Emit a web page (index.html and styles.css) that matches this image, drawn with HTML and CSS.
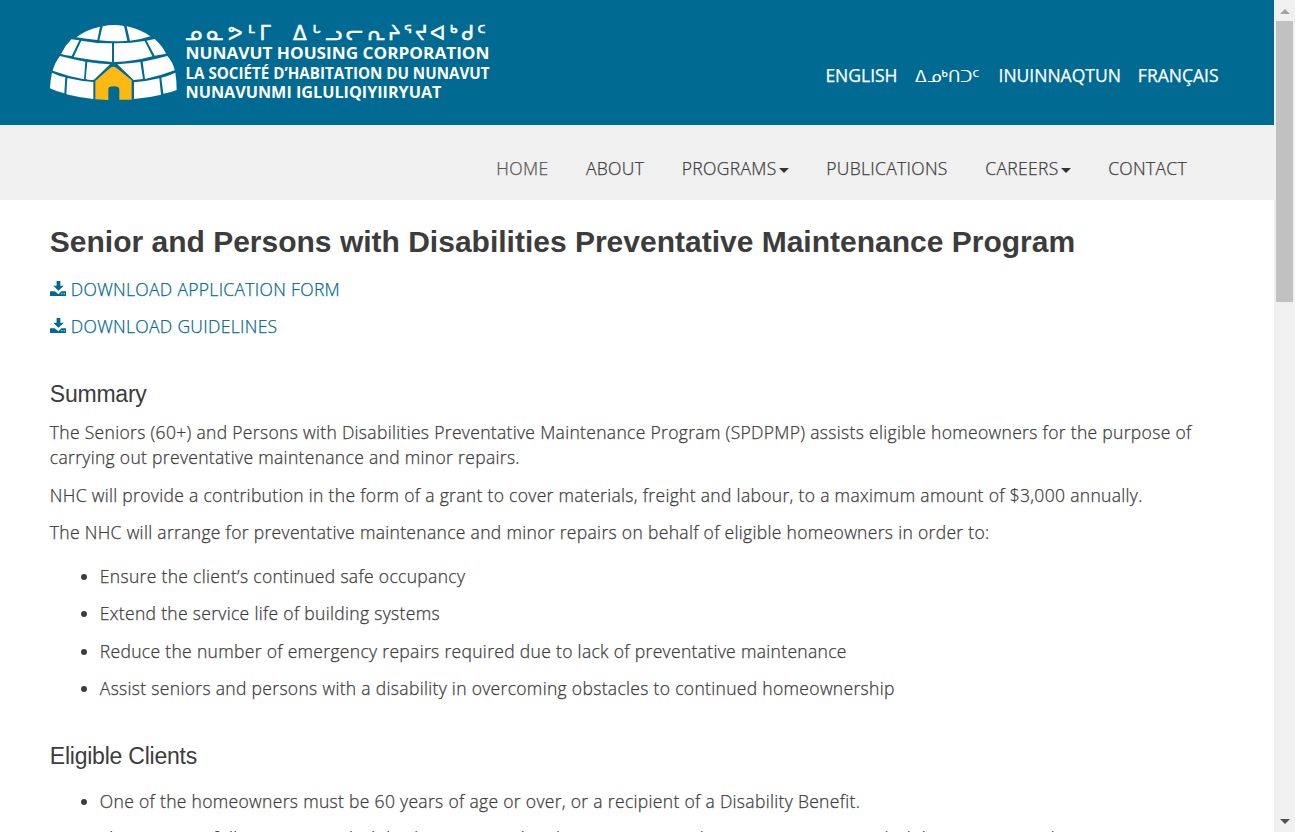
FILE: index.html
```html
<!DOCTYPE html>
<html lang="en">
<head>
<meta charset="utf-8">
<title>Nunavut Housing Corporation</title>
<link rel="stylesheet" href="styles.css">
</head>
<body>
<div class="window">
<div class="page">
<header class="top">
<svg class="logo" width="450" height="92" viewBox="50 16 450 92" role="img" aria-label="Nunavut Housing Corporation">
<g transform="translate(40 10) scale(.33333)">
<g fill="#fff">
<path d="M188 49Q220 42 252 48L262 92Q220 96 178 91Z"/>
<path d="M180 50L172 90Q140 87 109 82Q140 58 180 50Z"/>
<path d="M260 49Q302 58 331 79Q302 89 270 92Z"/>
<path d="M94 88L118 91L95 138Q79 137 63 132Q74 108 94 88Z"/>
<path d="M124 92Q170 101 216 100V156Q160 152 101 141Z"/>
<path d="M222 100Q270 101 314 93L337 139Q280 155 222 156Z"/>
<path d="M320 92L344 87Q367 107 378 131L344 137Z"/>
<path d="M60 138Q98 148 136 155L132 208Q85 199 38 182Q44 158 60 138Z"/>
<path d="M142 156Q178 161 210 163L162 209Q150 212 137 207Z"/>
<path d="M232 163Q270 160 301 156L309 207L281 210Z"/>
<path d="M308 155Q346 148 382 138Q400 158 404 181Q360 198 315 207Z"/>
<path d="M36 188Q56 198 76 202L73 250Q52 246 30 235Q31 210 36 188Z"/>
<path d="M82 204Q120 213 160 216V267Q118 263 79 253Z"/>
<path d="M282 217Q320 214 358 205L363 254Q324 264 282 267Z"/>
<path d="M364 203Q388 197 406 188Q410 211 410 240Q392 248 370 251Z"/>
</g>
<path fill="#fdb913" d="M166 213L211 173Q220 167 229 173L275 211V269H238V239Q238 229 221 229T205 239V270L166 268Z"/>
</g>
<g class="logo-text">
<text class="syllabics" y="39.600" x="185 206.500 228 248 259.500 293 312.500 325 346 367 388 403.500 415 430 449.500 461.500 477">ᓄᓇᕗᒻᒥᐃᒡᓗᓕᕆᔨᕐᔪᐊᒃᑯᑦ</text>
<text x="185.500" y="59.200" textLength="304" lengthAdjust="spacingAndGlyphs">NUNAVUT HOUSING CORPORATION</text>
<text x="185.500" y="78.500" textLength="304" lengthAdjust="spacingAndGlyphs">LA SOCIÉTÉ D’HABITATION DU NUNAVUT</text>
<text x="185.500" y="98" textLength="256" lengthAdjust="spacingAndGlyphs">NUNAVUNMI IGLULIQIYIIRYUAT</text>
</g>
</svg>
<nav class="languages"><a>ENGLISH</a><a class="inuktitut">ᐃᓄᒃᑎᑐᑦ</a><a>INUINNAQTUN</a><a>FRANÇAIS</a></nav>
</header>
<nav class="menu"><a class="active">HOME</a><a>ABOUT</a><a>PROGRAMS<i class="caret"></i></a><a>PUBLICATIONS</a><a>CAREERS<i class="caret"></i></a><a>CONTACT</a></nav>
<main class="content">
<h1>Senior and Persons with Disabilities Preventative Maintenance Program</h1>
<p><a class="download"><svg class="icon" width="16" height="15" viewBox="0 0 17 16" preserveAspectRatio="none"><path fill="currentColor" fill-rule="evenodd" d="M7 0h4v5h3.500L9 10.500 3.500 5H7zM0 11h5l4 3 3-3h5v5H0zM12 13v1.200h1.200V13zm2.500 0v1.200h1.200V13z"/></svg>DOWNLOAD APPLICATION FORM</a></p>
<p><a class="download"><svg class="icon" width="16" height="15" viewBox="0 0 17 16" preserveAspectRatio="none"><path fill="currentColor" fill-rule="evenodd" d="M7 0h4v5h3.500L9 10.500 3.500 5H7zM0 11h5l4 3 3-3h5v5H0zM12 13v1.200h1.200V13zm2.500 0v1.200h1.200V13z"/></svg>DOWNLOAD GUIDELINES</a></p>
<h2>Summary</h2>
<p>The Seniors (60+) and Persons with Disabilities Preventative Maintenance Program (SPDPMP) assists eligible homeowners for the purpose of carrying out preventative maintenance and minor repairs.</p>
<p>NHC will provide a contribution in the form of a grant to cover materials, freight and labour, to a maximum amount of $3,000 annually.</p>
<p>The NHC will arrange for preventative maintenance and minor repairs on behalf of eligible homeowners in order to:</p>
<ul>
<li>Ensure the client’s continued safe occupancy</li>
<li>Extend the service life of building systems</li>
<li>Reduce the number of emergency repairs required due to lack of preventative maintenance</li>
<li>Assist seniors and persons with a disability in overcoming obstacles to continued homeownership</li>
</ul>
<h2>Eligible Clients</h2>
<ul>
<li>One of the homeowners must be 60 years of age or over, or a recipient of a Disability Benefit.</li>
<li>This program follows income eligibility limits as used on homeowners, each in a means census, eligibility as measured</li>
</ul>
</main>
</div>
<div class="scrollbar"><i class="arrow up"></i><i class="thumb"></i><i class="arrow down"></i></div>
</div>
</body>
</html>
```
FILE: styles.css
```css
* { box-sizing: border-box; }
body {
  margin: 0;
  overflow: hidden;
  background: #fff;
  color: #3c3c3c;
  font: 300 17.5px/25px "Open Sans", "DejaVu Sans", sans-serif;
  letter-spacing: .32px;
  -webkit-text-stroke: .25px;
}
.window { display: flex; width: 1295px; height: 832px; overflow: hidden; }
.page { width: 1274px; height: 832px; overflow: hidden; }
.top {
  display: flex;
  justify-content: space-between;
  height: 125px;
  padding: 16px 55.5px 0 50px;
  background: #006a92;
}
.logo { display: block; overflow: visible; }
.logo-text {
  fill: #fff;
  font: 700 15.200px "Open Sans", sans-serif;
  letter-spacing: 0;
}
.syllabics { font: 400 20px "DejaVu Sans", sans-serif; stroke: #fff; stroke-width: .5px; }
.languages { display: flex; gap: 17px; padding-top: 47px; color: #fff; font-weight: 400; letter-spacing: 0; }
.inuktitut {
  width: 67px;
  padding-top: 1px;
  font-family: "DejaVu Sans", sans-serif;
  font-size: 17.3px;
  font-weight: 200;
  -webkit-text-stroke: 0;
}
.menu {
  display: flex;
  justify-content: flex-end;
  gap: 37.600px;
  height: 75px;
  padding: 31px 87px 0 0;
  background: #f0f0f0;
}
.active { color: #555; }
.caret {
  display: inline-block;
  margin-left: 2px;
  vertical-align: middle;
  border: 5px solid transparent;
  border-top-color: #333;
  border-bottom: 0;
}
.content { padding: 22px 50px 0 49.800px; }
h1, h2 {
  margin: 0;
  font-family: "Liberation Sans", Arial, sans-serif;
  letter-spacing: 0;
  -webkit-text-stroke: 0;
}
h1 { margin-bottom: 15.900px; font-size: 30px; line-height: 39px; font-weight: 700; }
h2 { margin: 43px 0 12.800px; font-size: 23px; line-height: 25px; font-weight: 400; letter-spacing: -.23px; }
p { margin: 0 0 12.500px; }
.download { color: #006a92; }
.icon { margin-right: 5px; vertical-align: 0; }
ul { margin: 18.700px 0 0; padding-left: 50px; }
h2 + ul { margin-top: 19.600px; }
li { margin-bottom: 12.500px; }
.scrollbar {
  display: flex;
  flex-direction: column;
  align-items: center;
  width: 21px;
  height: 832px;
  padding: 9px 0 8px;
  background: #f0f0f0;
}
.thumb { width: 17px; height: 281px; margin-top: 7px; background: #c1c1c1; }
.arrow { border: 5px solid transparent; }
.up { border-top: 0; border-bottom-color: #a3a3a3; }
.down { margin-top: auto; border-bottom: 0; border-top-color: #505050; }
```
